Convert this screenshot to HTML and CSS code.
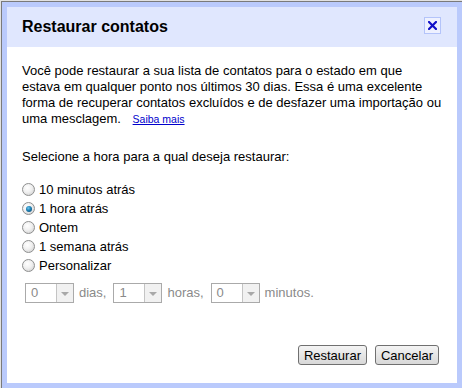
FILE: index.html
```html
<!DOCTYPE html>
<html lang="pt-BR">
<head>
    <meta charset="UTF-8">
    <title>Restaurar contatos</title>
    <link rel="stylesheet" href="styles.css">
</head>
<body>
    <div class="screen">
        <div class="dialog">
            <!-- Title bar -->
            <div class="dialog-title">
                <span>Restaurar contatos</span>
                <span class="close" title="Fechar">
                    <svg width="9" height="9" viewBox="0 0 9 9">
                        <path d="M1 1 L8 8 M8 1 L1 8" stroke="#1010c8" stroke-width="2.2" stroke-linecap="square"></path>
                    </svg>
                </span>
            </div>

            <div class="dialog-body">
                <p class="intro">Você pode restaurar a sua lista de contatos para o estado em que estava em qualquer ponto nos últimos 30 dias. Essa é uma excelente forma de recuperar contatos excluídos e de desfazer uma importação ou uma mesclagem. <a href="#">Saiba mais</a></p>

                <p class="question">Selecione a hora para a qual deseja restaurar:</p>

                <div class="options">
                    <label class="option"><input type="radio" name="when"> 10 minutos atrás</label>
                    <label class="option"><input type="radio" name="when" checked> 1 hora atrás</label>
                    <label class="option"><input type="radio" name="when"> Ontem</label>
                    <label class="option"><input type="radio" name="when"> 1 semana atrás</label>
                    <label class="option"><input type="radio" name="when"> Personalizar</label>
                </div>

                <!-- Custom range (disabled) -->
                <div class="custom-range">
                    <span class="select"><span class="value">0</span><span class="arrow"></span></span>
                    <span class="unit">dias,</span>
                    <span class="select"><span class="value">1</span><span class="arrow"></span></span>
                    <span class="unit">horas,</span>
                    <span class="select"><span class="value">0</span><span class="arrow"></span></span>
                    <span class="unit">minutos.</span>
                </div>

                <div class="buttons">
                    <button>Restaurar</button>
                    <button>Cancelar</button>
                </div>
            </div>
        </div>
    </div>
</body>
</html>
```

FILE: styles.css
```css
:root {
    --frame-blue: #bacafc;
    --title-bg: #e0e7fe;
    --link: #0000cc;
    --disabled: #8a8a8a;
}

body {
    margin: 0;
    background-color: #e2e2e2;
    font-family: "Liberation Sans", Arial, sans-serif;
    font-size: 13px;
    color: #000;
}

.screen {
    height: 388px;
    padding: 1px 0 0 1px;
    box-sizing: border-box;
    overflow: hidden;
}

.dialog {
    height: 387px;
    box-sizing: border-box;
    border-top: 1px solid #7a7a7a;
    border-left: 1px solid #7a7a7a;
    display: flex;
    flex-direction: column;
    box-shadow: inset 0 0 0 5px var(--frame-blue);
    padding: 5px;
    background-color: #fff;
}

.dialog-title {
    height: 40px;
    background-color: var(--title-bg);
    display: flex;
    align-items: center;
    justify-content: space-between;
    padding: 0 16px 0 15px;
    font-size: 16px;
    font-weight: bold;
    line-height: 20px;
}

.close {
    width: 15px;
    height: 15px;
    border: 1px solid #b4c4fa;
    background-color: #eef1ff;
    display: flex;
    align-items: center;
    justify-content: center;
    margin-top: -3px;
}

.dialog-body {
    flex: 1;
    padding: 16px 15px 0 15px;
    line-height: 16px;
}

p {
    margin: 0;
}

.intro {
    margin-bottom: 22px;
}

.intro a {
    display: inline-block;
    color: var(--link);
    font-size: 10.5px;
    line-height: 12px;
    margin-left: 8px;
}

.question {
    margin-bottom: 15px;
}

.options {
    display: flex;
    flex-direction: column;
}

.option {
    height: 19px;
    display: flex;
    align-items: center;
    gap: 4px;
}

.option input {
    appearance: none;
    -webkit-appearance: none;
    width: 13px;
    height: 13px;
    margin: 0;
    border: 1px solid #8e8f8f;
    border-radius: 50%;
    box-sizing: border-box;
    background: radial-gradient(circle at 40% 35%, #ffffff 0%, #f0f0f0 45%, #c8c8c8 100%);
    position: relative;
}

.option input:checked::after {
    content: "";
    position: absolute;
    left: 2.5px;
    top: 2.5px;
    width: 6px;
    height: 6px;
    border-radius: 50%;
    background: radial-gradient(circle at 40% 35%, #6fc6ef 0%, #1c7fb3 45%, #0b3f63 100%);
}

.custom-range {
    display: flex;
    align-items: center;
    margin: 8px 0 0 3px;
    color: var(--disabled);
}

.select {
    width: 49px;
    height: 20px;
    box-sizing: border-box;
    border: 1px solid #aaaaaa;
    display: flex;
    background-color: #fff;
}

.select .value {
    flex: 1;
    padding-left: 5px;
    line-height: 18px;
}

.select .arrow {
    width: 16px;
    border-left: 1px solid #c4c4c4;
    background-color: #f1f1f1;
    display: flex;
    align-items: center;
    justify-content: center;
}

.select .arrow::after {
    content: "";
    border-left: 4px solid transparent;
    border-right: 4px solid transparent;
    border-top: 4px solid #a8a8a8;
    margin-top: 1px;
}

.unit {
    margin: 0 7px 0 5px;
}

.buttons {
    display: flex;
    justify-content: flex-end;
    gap: 8px;
    margin-top: 42px;
    padding-right: 3px;
}

button {
    font-family: inherit;
    font-size: 13px;
    height: 20px;
    padding: 0 5px;
    border: 1px solid #707070;
    border-radius: 3px;
    background: linear-gradient(#f4f4f4, #e6e6e6 50%, #d8d8d8);
    color: #000;
    cursor: pointer;
}
```
